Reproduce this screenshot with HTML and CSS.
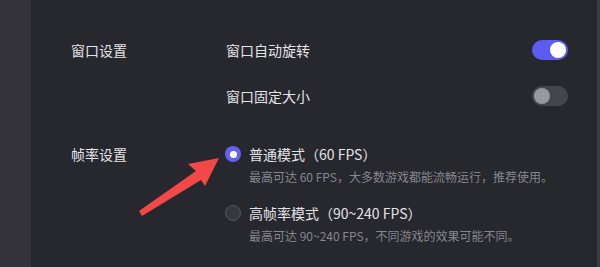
FILE: index.html
```html
<!DOCTYPE html>
<html lang="zh-CN">
<head>
    <meta charset="UTF-8">
    <title>设置</title>
    <link rel="stylesheet" href="styles.css">
</head>
<body>
    <div class="layout">
        <aside class="sidebar"></aside>

        <main class="panel">
            <section class="group group-window">
                <div class="group-label">窗口设置</div>
                <div class="group-body">
                    <div class="switch-row">
                        <span class="row-title">窗口自动旋转</span>
                        <span class="switch on"><span class="knob"></span></span>
                    </div>
                    <div class="switch-row">
                        <span class="row-title">窗口固定大小</span>
                        <span class="switch"><span class="knob"></span></span>
                    </div>
                </div>
            </section>

            <section class="group group-fps">
                <div class="group-label">帧率设置</div>
                <div class="group-body">
                    <div class="radio-option">
                        <span class="radio checked"></span>
                        <div class="option-text">
                            <div class="option-title">普通模式（60 FPS）</div>
                            <div class="option-desc">最高可达 60 FPS，大多数游戏都能流畅运行，推荐使用。</div>
                        </div>
                    </div>
                    <div class="radio-option">
                        <span class="radio"></span>
                        <div class="option-text">
                            <div class="option-title">高帧率模式（90~240 FPS）</div>
                            <div class="option-desc">最高可达 90~240 FPS，不同游戏的效果可能不同。</div>
                        </div>
                    </div>
                </div>
            </section>

            <!-- annotation arrow pointing at the recommended option -->
            <svg class="arrow" width="600" height="267" viewBox="0 0 600 267">
                <polygon points="219,158 188,164 196,171 139,211 142,216 201,180 205,186" fill="#f24848"/>
            </svg>
        </main>

        <div class="scrollbar"></div>
    </div>
</body>
</html>
```

FILE: styles.css
```css
* {
    margin: 0;
    padding: 0;
    box-sizing: border-box;
}

body {
    background-color: #27272e;
    color: #e4e4e8;
    font-family: "Noto Sans CJK SC", "Noto Sans", sans-serif;
    font-size: 14px;
    overflow: hidden;
}

.layout {
    display: flex;
    width: 600px;
    height: 267px;
}

.sidebar {
    width: 31px;
    background-color: #333339;
}

.panel {
    flex: 1;
    padding: 27px 29px 0 40px;
}

.scrollbar {
    width: 3px;
    background-color: #3b3b42;
}

.group {
    display: flex;
}

.group-fps {
    margin-top: 25px;
}

.group-label {
    width: 154px;
    height: 20px;
    line-height: 20px;
}

.group-window .group-label {
    margin-top: 13px;
}

.group-body {
    flex: 1;
}

.switch-row {
    display: flex;
    align-items: center;
    justify-content: space-between;
    height: 46px;
}

.row-title {
    line-height: 20px;
    padding-left: 1px;
}

.switch {
    position: relative;
    width: 36px;
    height: 20px;
    border-radius: 10px;
    background-color: #45454d;
}

.switch .knob {
    position: absolute;
    top: 2px;
    left: 2px;
    width: 16px;
    height: 16px;
    border-radius: 50%;
    background-color: #98989e;
}

.switch.on {
    background-color: #5c5cf2;
}

.switch.on .knob {
    left: 18px;
    background-color: #ffffff;
}

.radio-option {
    display: flex;
    gap: 8px;
    margin-bottom: 17px;
}

.radio {
    flex: none;
    width: 16px;
    height: 16px;
    margin-top: 2px;
    border-radius: 50%;
    border: 1px solid #55555d;
    background-color: #37373e;
}

.radio.checked {
    border: none;
    background-color: #6262f4;
    display: flex;
    align-items: center;
    justify-content: center;
}

.radio.checked::after {
    content: "";
    width: 7px;
    height: 7px;
    border-radius: 50%;
    background-color: #ffffff;
}

.option-title {
    line-height: 20px;
}

.option-desc {
    margin-top: 4px;
    font-size: 12px;
    line-height: 18px;
    color: #86868d;
}

.arrow {
    position: absolute;
    top: 0;
    left: 0;
    pointer-events: none;
}
```
